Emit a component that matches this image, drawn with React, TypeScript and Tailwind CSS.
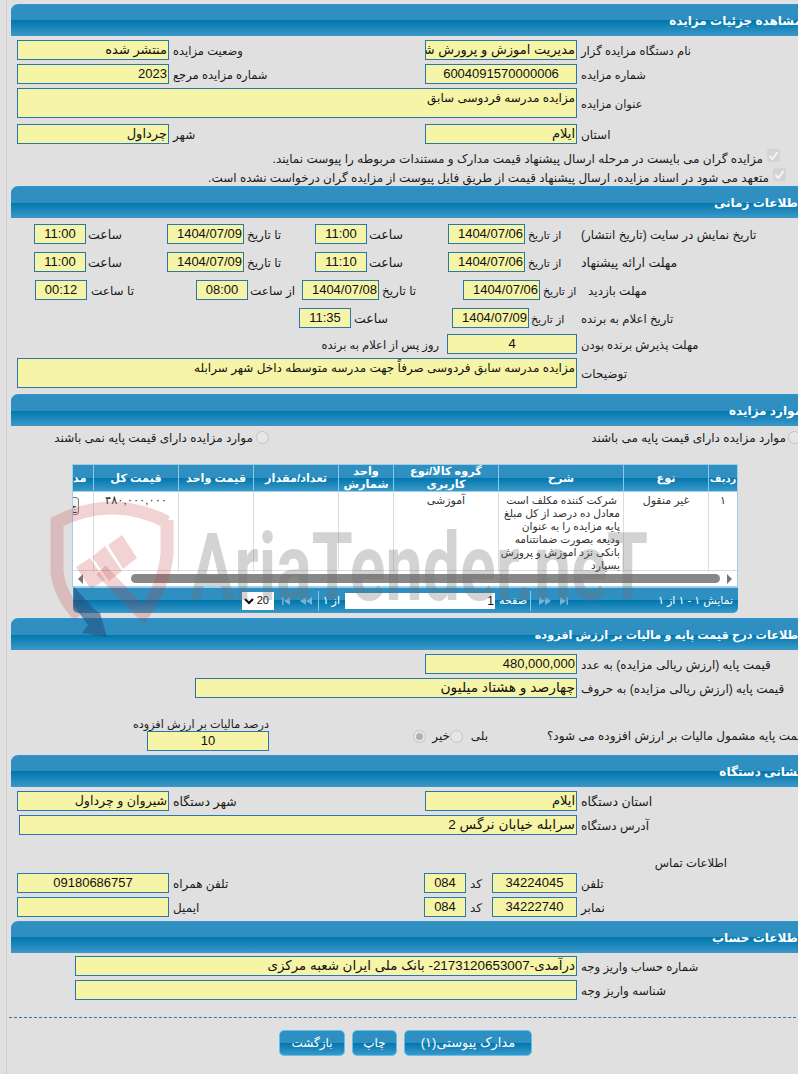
import type { ReactNode } from 'react'

const barGradient = 'bg-[linear-gradient(to_bottom,#2e8fc0_0%,#2e8fc0_50%,#0077ae_50%,#3c98c8_100%)]'

function SectionHeader({ title, size = 'text-[12px]' }: { title: string; size?: string }) {
  return (
    <div
      dir="rtl"
      className={`flex h-8 w-[791px] items-center rounded-tl-[7px] border-t border-[#2f97d8] pt-px font-bold text-white ${size} ${barGradient}`}
    >
      <span className="whitespace-nowrap">{title}</span>
    </div>
  )
}

function Field({
  width,
  height = 'h-5',
  size = 'text-[13px]',
  center = false,
  children,
}: {
  width: string
  height?: string
  size?: string
  center?: boolean
  children?: ReactNode
}) {
  return (
    <div
      dir="rtl"
      className={`${width} ${height} ${size} shrink-0 overflow-hidden whitespace-nowrap border border-[#2a78ab] bg-[#f6f4a6] px-px leading-[18px] text-[#111] ${
        center ? 'text-center' : 'text-right'
      }`}
    >
      {children}
    </div>
  )
}

function Label({
  children,
  size = 'text-[12px]',
  gap = 'ml-1',
}: {
  children: ReactNode
  size?: string
  gap?: string
}) {
  return (
    <span dir="rtl" className={`${gap} ${size} whitespace-nowrap pt-[2px] leading-4 text-[#1a1a1a]`}>
      {children}
    </span>
  )
}

function Row({ className = '', children }: { className?: string; children: ReactNode }) {
  return <div className={`flex items-center ${className}`}>{children}</div>
}

function Group({ width, children }: { width: string; children: ReactNode }) {
  return <div className={`flex shrink-0 items-center ${width}`}>{children}</div>
}

function Radio({ checked = false }: { checked?: boolean }) {
  return (
    <span className="flex h-[13px] w-[13px] shrink-0 items-center justify-center rounded-full border border-[#c4c4c4] bg-[#e6e6e6]">
      {checked ? <span className="h-[7px] w-[7px] rounded-full bg-[#b0b0b0]" /> : null}
    </span>
  )
}

function CheckedBox() {
  return (
    <span className="flex h-[13px] w-[13px] shrink-0 items-center justify-center rounded-[2px] bg-[#d4d4d4]">
      <svg viewBox="0 0 13 13" className="h-[13px] w-[13px]" fill="none" stroke="#f4f4f4" strokeWidth="2">
        <path d="M2.5 7 5.3 10 10.5 3" />
      </svg>
    </span>
  )
}

function PagerArrow({ d }: { d: string }) {
  return (
    <svg viewBox="0 0 12 8" className="h-2 w-3 shrink-0" fill="#74b6da">
      <path d={d} />
    </svg>
  )
}

function Watermark() {
  return (
    <svg viewBox="0 0 798 1074" className="pointer-events-none absolute left-0 top-0 z-10 h-[1074px] w-[798px]">
      <g fill="none" stroke="#c83c3c" strokeWidth="13" opacity="0.22">
        <path d="M167 522 Q112 494 57 522 L57 572 Q60 596 79 616" />
        <path d="M167 520 L167 555 Q163 588 143 614 L101 570" />
      </g>
      <g fill="#c83c3c" opacity="0.22">
        <path d="M108 545 L122 535 L137 558 L123 569 Z" />
        <path d="M92 557 L105 546 L122 571 L109 581 Z" />
        <path d="M76 567 L90 558 L105 580 L91 589 Z" />
      </g>
      <path
        d="M74 587 L94 609 L100 613 L107 637 L82 633 L88 625 L74 606 Z"
        fill="#24527e"
        opacity="0.6"
      />
      <text
        x="190"
        y="600"
        fontFamily="Roboto, sans-serif"
        fontWeight="700"
        fontSize="94"
        textLength="458"
        lengthAdjust="spacingAndGlyphs"
        fill="#707070"
        opacity="0.3"
      >
        AriaTender.neT
      </text>
    </svg>
  )
}

const tableCols = 'grid grid-cols-[21px_85px_75px_85px_55px_105px_125px_85px_28px]'

const TABLE_HEADS = ['مد', 'قیمت کل', 'قیمت واحد', 'تعداد/مقدار', 'واحد شمارش', 'گروه کالا/نوع کاربری', 'شرح', 'نوع', 'ردیف']

const DESCRIPTION_LINES = [
  'شرکت کننده مکلف است',
  'معادل ده درصد از کل مبلغ',
  'پایه مزایده را به عنوان',
  'ودیعه بصورت ضمانتنامه',
  'بانکی نزد اموزش و پرورش',
  'بسپارد',
]

function ItemsTable() {
  return (
    <div className="ml-[55px] mt-[19px] w-[666px]">
      <div className="border-x border-b-2 border-[#9ccfec]">
        <div className={`${tableCols} h-[27px] border-t border-[#9ccfec] ${barGradient}`}>
          {TABLE_HEADS.map((head, index) => (
            <div
              key={head}
              dir="rtl"
              className={`flex items-center overflow-hidden text-center font-bold leading-[13px] text-white ${
                index === TABLE_HEADS.length - 1 ? 'text-[10px]' : 'text-[11.3px]'
              } ${index === 0 ? 'justify-end' : 'justify-center'} ${
                index < TABLE_HEADS.length - 1 ? 'border-r border-[#85c9ee]' : ''
              }`}
            >
              {head}
            </div>
          ))}
        </div>
        <div className={`${tableCols} h-[79px] border-t border-[#9ccfec] bg-white text-[11px] leading-[13px] text-[#333]`}>
          <div className="overflow-hidden border-r border-[#dcdcdc] pt-[5px]">
            <div className="ml-[-8px] flex h-[18px] w-[14px] items-center justify-end rounded-[3px] border border-[#808080] bg-[#f2f2f2] pr-px text-[10px]">
              ج
            </div>
          </div>
          <div dir="rtl" className="border-r border-[#dcdcdc] pt-[2px] text-center text-[11.5px]">
            ۴۸۰,۰۰۰,۰۰۰
          </div>
          <div className="border-r border-[#dcdcdc]" />
          <div className="border-r border-[#dcdcdc]" />
          <div className="border-r border-[#dcdcdc]" />
          <div dir="rtl" className="border-r border-[#dcdcdc] pt-[2px] text-center">
            آموزشی
          </div>
          <div dir="rtl" className="whitespace-nowrap border-r border-[#dcdcdc] pr-[3px] pt-[2px] text-[10.7px]">
            {DESCRIPTION_LINES.map((line, index) => (
              <div key={line} className={index === 0 ? 'pr-[3px]' : ''}>
                {line}
              </div>
            ))}
          </div>
          <div dir="rtl" className="border-r border-[#dcdcdc] pt-[2px] text-center">
            غیر منقول
          </div>
          <div dir="rtl" className="pt-[2px] text-center">
            ۱
          </div>
        </div>
        <div className="flex h-[16px] items-center border-t border-[#dcdcdc] bg-white">
          <span className="ml-[5px] h-0 w-0 border-y-[5px] border-r-[5px] border-y-transparent border-r-[#777]" />
          <span className="ml-[48px] h-[9px] w-[589px] rounded-full bg-[#888]" />
          <span className="ml-[7px] h-0 w-0 border-y-[5px] border-l-[5px] border-y-transparent border-l-[#777]" />
        </div>
      </div>
      <div className={`ml-px flex h-[25px] w-[665px] items-center rounded-b-[5px] text-[11px] text-white ${barGradient}`}>
        <div className="ml-[169px] flex h-[18px] w-8 shrink-0 items-center justify-between bg-white pl-[2px] pr-[5px] text-[#111]">
          <svg viewBox="0 0 10 8" className="h-2 w-[10px]" fill="none" stroke="#111" strokeWidth="2.2">
            <path d="M1 2 5 6 9 2" />
          </svg>
          <span>20</span>
        </div>
        <span className="ml-2">
          <PagerArrow d="M0 0h1.5v8H0zM2 4l6-4v8z" />
        </span>
        <span className="ml-[6px]">
          <PagerArrow d="M0 4l6-4v8zM6 4l6-4v8z" />
        </span>
        <span className="ml-[6px] h-5 w-px bg-[#8cc4e2]" />
        <span dir="rtl" className="ml-[5px] w-[16px] whitespace-nowrap">
          از ۱
        </span>
        <div className="ml-[5px] h-4 w-[150px] bg-white pr-px text-right text-[12px] leading-4 text-[#111]">1</div>
        <span dir="rtl" className="ml-1 w-[28px] whitespace-nowrap">
          صفحه
        </span>
        <span className="ml-[3px] h-5 w-px bg-[#8cc4e2]" />
        <span className="ml-2">
          <PagerArrow d="M0 0l6 4-6 4zM6 0l6 4-6 4z" />
        </span>
        <span className="ml-[9px]">
          <PagerArrow d="M0 0l6 4-6 4zM6.5 0H8v8H6.5z" />
        </span>
        <span dir="rtl" className="ml-auto mr-[5px] whitespace-nowrap">
          نمایش ۱ - ۱ از ۱
        </span>
      </div>
    </div>
  )
}

function ActionButton({ width, size = 'text-[12px]', children }: { width: string; size?: string; children: ReactNode }) {
  return (
    <button
      type="button"
      dir="rtl"
      className={`${width} ${size} h-[26px] rounded-[5px] border border-[#5cc3ec] text-white ${barGradient}`}
    >
      {children}
    </button>
  )
}

export default function App() {
  return (
    <div className="relative h-[1074px] w-[798px] overflow-hidden bg-[#e0e0e0] text-[12px] [font-family:'Liberation_Sans','DejaVu_Sans',sans-serif]">
      <Watermark />
      <div className="ml-[6px] h-full w-[900px] border-l border-[#cecece] pl-1 pt-1">
        <SectionHeader title="مشاهده جزئیات مزایده" />
        <div className="pl-[6px]">
          <Row className="mt-1">
            <Group width="w-[408px]">
              <Field width="w-[152px]">منتشر شده</Field>
              <Label size="text-[11.5px]">وضعیت مزایده</Label>
            </Group>
            <Field width="w-[152px]">مدیریت اموزش و پرورش شهرستان</Field>
            <Label size="text-[11.6px]">نام دستگاه مزایده گزار</Label>
          </Row>
          <Row className="mt-1">
            <Group width="w-[408px]">
              <Field width="w-[152px]">2023</Field>
              <Label size="text-[11.5px]">شماره مزایده مرجع</Label>
            </Group>
            <Field width="w-[152px]" center>
              6004091570000006
            </Field>
            <Label size="text-[11.4px]">شماره مزایده</Label>
          </Row>
          <Row className="mt-1">
            <Field width="w-[560px]" height="h-[30px]" size="text-[12px]">
              مزایده مدرسه فردوسی سابق
            </Field>
            <Label size="text-[11.4px]">عنوان مزایده</Label>
          </Row>
          <Row className="mt-[6px]">
            <Group width="w-[408px]">
              <Field width="w-[152px]">چرداول</Field>
              <Label>شهر</Label>
            </Group>
            <Field width="w-[152px]">ایلام</Field>
            <Label>استان</Label>
          </Row>
          <Row className="mt-1 h-[19px] w-[763px] justify-end">
            <span dir="rtl" className="mr-1 mt-[2px] whitespace-nowrap text-[#1a1a1a]">
              مزایده گران می بایست در مرحله ارسال پیشنهاد قیمت مدارک و مستندات مربوطه را پیوست نمایند.
            </span>
            <span className="mb-[5px]">
              <CheckedBox />
            </span>
          </Row>
          <Row className="h-[19px] w-[769px] justify-end">
            <span dir="rtl" className="mr-1 mt-[2px] whitespace-nowrap text-[#1a1a1a]">
              متعهد می شود در اسناد مزایده، ارسال پیشنهاد قیمت از طریق فایل پیوست از مزایده گران درخواست نشده است.
            </span>
            <span className="mb-[5px]">
              <CheckedBox />
            </span>
          </Row>
        </div>

        <SectionHeader title="اطلاعات زمانی" />
        <div className="pl-[6px]">
          <Row className="ml-[17px] mt-[6px]">
            <Group width="w-[133px]">
              <Field width="w-[52px]" center>11:00</Field>
              <Label gap="ml-[2px]" size="text-[12.5px]">ساعت</Label>
            </Group>
            <Group width="w-[148px]">
              <Field width="w-[77px]">1404/07/09</Field>
              <Label gap="ml-[3px]">تا تاریخ</Label>
            </Group>
            <Group width="w-[133px]">
              <Field width="w-[52px]" center>11:00</Field>
              <Label gap="ml-[2px]" size="text-[12.5px]">ساعت</Label>
            </Group>
            <Group width="w-[133px]">
              <Field width="w-[77px]">1404/07/06</Field>
              <Label gap="ml-[3px]" size="text-[11px]">از تاریخ</Label>
            </Group>
            <Label gap="ml-0">تاریخ نمایش در سایت (تاریخ انتشار)</Label>
          </Row>
          <Row className="ml-[17px] mt-2">
            <Group width="w-[133px]">
              <Field width="w-[52px]" center>11:00</Field>
              <Label gap="ml-[2px]" size="text-[12.5px]">ساعت</Label>
            </Group>
            <Group width="w-[148px]">
              <Field width="w-[77px]">1404/07/09</Field>
              <Label gap="ml-[3px]">تا تاریخ</Label>
            </Group>
            <Group width="w-[133px]">
              <Field width="w-[52px]" center>11:10</Field>
              <Label gap="ml-[2px]" size="text-[12.5px]">ساعت</Label>
            </Group>
            <Group width="w-[133px]">
              <Field width="w-[77px]">1404/07/06</Field>
              <Label gap="ml-[3px]" size="text-[11px]">از تاریخ</Label>
            </Group>
            <Label gap="ml-0" size="text-[12.5px]">مهلت ارائه پیشنهاد</Label>
          </Row>
          <Row className="ml-[18px] mt-2">
            <Group width="w-[161px]">
              <Field width="w-[52px]" center>00:12</Field>
              <Label>تا ساعت</Label>
            </Group>
            <Group width="w-[106px]">
              <Field width="w-[52px]" center>08:00</Field>
              <Label gap="ml-[2px]">از ساعت</Label>
            </Group>
            <Group width="w-[161px]">
              <Field width="w-[77px]">1404/07/08</Field>
              <Label gap="ml-[3px]">تا تاریخ</Label>
            </Group>
            <Group width="w-[118px]">
              <Field width="w-[77px]">1404/07/06</Field>
              <Label gap="ml-[3px]" size="text-[11px]">از تاریخ</Label>
            </Group>
            <Label gap="ml-[7px]">مهلت بازدید</Label>
          </Row>
          <Row className="ml-[282px] mt-2">
            <Group width="w-[153px]">
              <Field width="w-[52px]" center>11:35</Field>
              <Label gap="ml-[3px]" size="text-[12.5px]">ساعت</Label>
            </Group>
            <Group width="w-[129px]">
              <Field width="w-[77px]">1404/07/09</Field>
              <Label gap="ml-[2px]" size="text-[11px]">از تاریخ</Label>
            </Group>
            <Label gap="ml-0" size="text-[11.7px]">تاریخ اعلام به برنده</Label>
          </Row>
          <Row className="mt-[6px]">
            <div dir="rtl" className="w-[430px] shrink-0 whitespace-nowrap pr-2 pt-[2px] text-[11.5px] leading-4 text-[#1a1a1a]">
              روز پس از اعلام به برنده
            </div>
            <Field width="w-[130px]" center>4</Field>
            <Label size="text-[11.6px]">مهلت پذیرش برنده بودن</Label>
          </Row>
          <Row className="mt-1">
            <Field width="w-[560px]" height="h-[30px]" size="text-[12px]">
              مزایده مدرسه سابق فردوسی صرفاً جهت مدرسه متوسطه داخل شهر سرابله
            </Field>
            <Label>توضیحات</Label>
          </Row>
        </div>

        <div className="mt-[6px]">
          <SectionHeader title="موارد مزایده" />
        </div>
        <div className="pl-[6px]">
          <Row className="mt-1 h-[15px]">
            <Group width="w-[252px] justify-end">
              <span dir="rtl" className="mr-[3px] whitespace-nowrap text-[#1a1a1a]">
                موارد مزایده دارای قیمت پایه نمی باشند
              </span>
              <Radio />
            </Group>
            <Group width="w-[532px] justify-end">
              <span dir="rtl" className="mr-[2px] whitespace-nowrap text-[#1a1a1a]">
                موارد مزایده دارای قیمت پایه می باشند
              </span>
              <Radio />
            </Group>
          </Row>
          <ItemsTable />
        </div>

        <div className="mt-[5px]">
          <SectionHeader title="اطلاعات درج قیمت پایه و مالیات بر ارزش افزوده" size="text-[11.3px]" />
        </div>
        <div className="pl-[6px]">
          <Row className="ml-[408px] mt-1">
            <Field width="w-[152px]">480,000,000</Field>
            <Label>قیمت پایه (ارزش ریالی مزایده) به عدد</Label>
          </Row>
          <Row className="ml-[178px] mt-1">
            <Field width="w-[382px]" size="text-[13.8px]">چهارصد و هشتاد میلیون</Field>
            <Label>قیمت پایه (ارزش ریالی مزایده) به حروف</Label>
          </Row>
          <div className="mt-5 flex h-[33px] items-start">
            <div className="ml-[130px] flex w-[122px] shrink-0 flex-col items-end">
              <span dir="rtl" className="h-[13px] whitespace-nowrap text-[11.2px] leading-[13px] text-[#1a1a1a]">
                درصد مالیات بر ارزش افزوده
              </span>
              <Field width="w-[122px]" center>10</Field>
            </div>
            <div className="ml-[144px] mt-[9px] flex items-center">
              <Radio checked />
              <span dir="rtl" className="ml-[5px] w-[19px] whitespace-nowrap text-[#1a1a1a]">
                خیر
              </span>
              <Radio />
              <span dir="rtl" className="ml-[5px] w-[20px] whitespace-nowrap text-[#1a1a1a]">
                بلی
              </span>
              <span dir="rtl" className="ml-[59px] whitespace-nowrap text-[#1a1a1a]">
                قیمت پایه مشمول مالیات بر ارزش افزوده می شود؟
              </span>
            </div>
          </div>
        </div>

        <div className="mt-1">
          <SectionHeader title="نشانی دستگاه" />
        </div>
        <div className="pl-[6px]">
          <Row className="mt-1">
            <Group width="w-[408px]">
              <Field width="w-[152px]" size="text-[12.6px]">شیروان و چرداول</Field>
              <Label size="text-[12.5px]">شهر دستگاه</Label>
            </Group>
            <Field width="w-[152px]">ایلام</Field>
            <Label size="text-[12.5px]">استان دستگاه</Label>
          </Row>
          <Row className="ml-[2px] mt-1">
            <Field width="w-[558px]" size="text-[13.6px]">سرابله خیابان نرگس 2</Field>
            <Label>آدرس دستگاه</Label>
          </Row>
          <div dir="rtl" className="ml-[638px] mt-[18px] h-[20px] w-[72px] whitespace-nowrap text-[11.7px] leading-[20px] text-[#1a1a1a]">
            اطلاعات تماس
          </div>
          <Row>
            <Group width="w-[407px]">
              <Field width="w-[152px]" center>09180686757</Field>
              <Label>تلفن همراه</Label>
            </Group>
            <Group width="w-[68px]">
              <Field width="w-[42px]" center>084</Field>
              <Label>کد</Label>
            </Group>
            <Field width="w-[85px]" center>34224045</Field>
            <Label>تلفن</Label>
          </Row>
          <Row className="mt-1">
            <Group width="w-[407px]">
              <Field width="w-[152px]" />
              <Label>ایمیل</Label>
            </Group>
            <Group width="w-[68px]">
              <Field width="w-[42px]" center>084</Field>
              <Label>کد</Label>
            </Group>
            <Field width="w-[85px]" center>34222740</Field>
            <Label>نمابر</Label>
          </Row>
        </div>

        <div className="mt-1">
          <SectionHeader title="اطلاعات حساب" />
        </div>
        <div className="pl-[6px]">
          <Row className="ml-[58px] mt-[3px]">
            <Field width="w-[502px]" size="text-[13.4px]">درآمدی-2173120653007- بانک ملی ایران شعبه مرکزی</Field>
            <Label size="text-[11.7px]">شماره حساب واریز وجه</Label>
          </Row>
          <Row className="ml-[58px] mt-1">
            <Field width="w-[502px]" />
            <Label>شناسه واریز وجه</Label>
          </Row>
        </div>

        <div className="ml-[-2px] mt-[17px] border-t border-dashed border-[#2a78ab]" />
        <div className="ml-[268px] mt-[12px] flex gap-[7px]">
          <ActionButton width="w-[66px]">بازگشت</ActionButton>
          <ActionButton width="w-[45px]">چاپ</ActionButton>
          <ActionButton width="w-[128px]" size="text-[13px]">مدارک پیوستی(۱)</ActionButton>
        </div>
      </div>
    </div>
  )
}
